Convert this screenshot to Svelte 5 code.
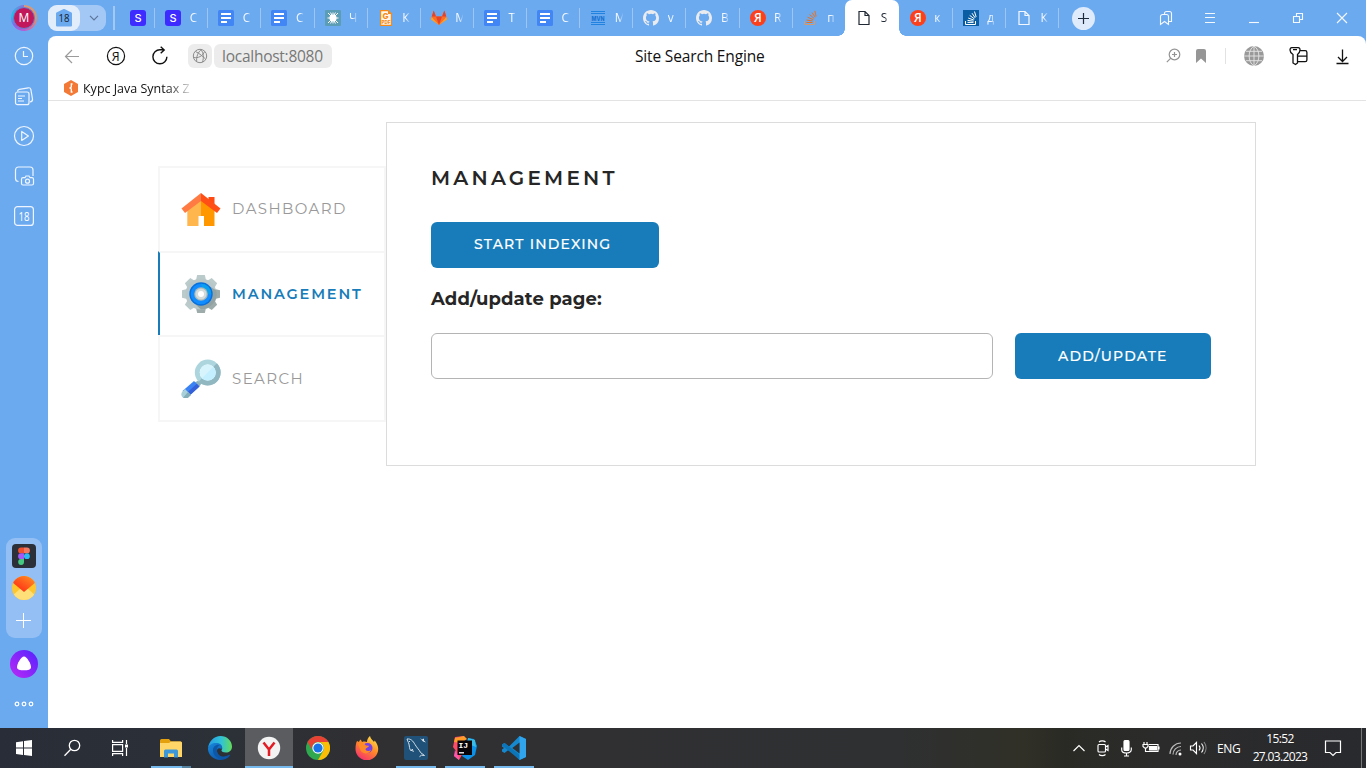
<script>
  const tabs = [
    { icon: 'skill', label: 'С' },
    { icon: 'doc', label: 'С' },
    { icon: 'doc', label: 'С' },
    { icon: 'burst', label: 'Ч' },
    { icon: 'pdf', label: 'К' },
    { icon: 'gitlab', label: 'М' },
    { icon: 'doc', label: 'Т' },
    { icon: 'doc', label: 'С' },
    { icon: 'mvn', label: 'М' },
    { icon: 'github', label: 'v' },
    { icon: 'github', label: 'В' },
    { icon: 'yandex', label: 'R' },
    { icon: 'stack', label: 'п' },
    { icon: 'file', label: 'S', active: true },
    { icon: 'yandex', label: 'к' },
    { icon: 'stackbox', label: 'д' },
    { icon: 'file', label: 'К' }
  ];
  const menu = [
    { icon: 'home', label: 'DASHBOARD' },
    { icon: 'gear', label: 'MANAGEMENT', active: true },
    { icon: 'lens', label: 'SEARCH' }
  ];
  const rail = ['clock', 'notes', 'play', 'shot', 'cal'];
  const apps = [
    { icon: 'folder', open: true },
    { icon: 'edge' },
    { icon: 'ybrowser', active: true },
    { icon: 'chrome' },
    { icon: 'firefox' },
    { icon: 'mysql', open: true },
    { icon: 'idea', open: true },
    { icon: 'vscode', open: true }
  ];
  const teeth = [0, 45, 90, 135, 180, 225, 270, 315];
  let pageUrl = '';
</script>

{#snippet favicon(name)}
  <svg class="fav" width="16" height="16" viewBox="0 0 16 16" fill="none">
    {#if name === 'skill'}
      <rect width="16" height="16" rx="3" fill="#3d2bff" />
      <text x="8" y="12" text-anchor="middle" font-size="11" font-weight="500" fill="#fff" font-family="Inter">S</text>
    {:else if name === 'doc'}
      <rect width="16" height="16" rx="1.5" fill="#4285f4" />
      <path d="M3 4h10M3 8h10M3 12h6" stroke="#fff" stroke-width="2" />
    {:else if name === 'burst'}
      <rect width="16" height="16" rx="1" fill="#5b9db5" />
      <circle cx="8" cy="8" r="3.6" fill="#fff" />
      <path d="M8 2.5v11M2.5 8h11M3 3l10 10M13 3L3 13M5.6 2.5l4.8 11M10.4 2.5l-4.8 11" stroke="#fff" />
    {:else if name === 'pdf'}
      <path d="M2.600.600h7.600l3.200 3.400v11.400H2.600z" fill="#fff8ee" stroke="#f78a16" stroke-width="1.200" />
      <path d="M10 0v4h4z" fill="#f78a16" />
      <text x="7.500" y="8.800" text-anchor="middle" font-size="8" font-weight="800" fill="#f78a16" font-family="Inter">G</text>
      <text x="8" y="14" text-anchor="middle" font-size="5" font-weight="800" fill="#f78a16" font-family="Inter" textLength="9" lengthAdjust="spacingAndGlyphs">PDF</text>
    {:else if name === 'gitlab'}
      <path d="M0 9L2.7.5 5 6.5h6L13.3.5 16 9l-8 6z" fill="#fc6d26" />
      <path d="M5 6.5h6L8 15z" fill="#e24329" />
      <path d="M.6 7L0 9.5 8 15zM15.4 7l.6 2.5L8 15z" fill="#fca326" />
      <path d="M.7 6.5L2.7.5 5 6.5zM11 6.5L13.3.5l2 6z" fill="#e24329" />
    {:else if name === 'mvn'}
      <path d="M1 1.500h14M1 3.500h14M1 12.500h14M1 14.500h14" stroke="#2182df" stroke-width="1" />
      <text x="8" y="10.500" text-anchor="middle" font-size="6.500" font-weight="800" fill="#1672d2" font-family="Inter" textLength="13" lengthAdjust="spacingAndGlyphs">MVN</text>
    {:else if name === 'github'}
      <path fill="#e9ebee" d="M8 0C3.58 0 0 3.58 0 8c0 3.54 2.29 6.53 5.47 7.59.4.07.55-.17.55-.38v-1.49c-2.01.37-2.53-.49-2.69-.94-.09-.23-.48-.94-.82-1.13-.28-.15-.68-.52-.01-.53.63-.01 1.08.58 1.23.82.72 1.21 1.87.87 2.33.66.07-.52.28-.87.51-1.07-1.78-.2-3.64-.89-3.64-3.95 0-.87.31-1.59.82-2.15-.08-.2-.36-1.02.08-2.12 0 0 .67-.21 2.2.82a7.6 7.6 0 014 0c1.53-1.04 2.2-.82 2.2-.82.44 1.1.16 1.92.08 2.12.51.56.82 1.27.82 2.15 0 3.07-1.87 3.75-3.65 3.95.29.25.54.73.54 1.48v2.2c0 .21.15.46.55.38A8 8 0 0016 8c0-4.42-3.58-8-8-8z" />
    {:else if name === 'yandex'}
      <circle cx="8" cy="8" r="8" fill="#fc3f1d" />
      <text x="7.8" y="12.4" text-anchor="middle" font-size="12" font-weight="600" fill="#fff" font-family="Open Sans">Я</text>
    {:else if name === 'stack'}
      <path d="M1.500 11v3.500h10V11" stroke="#d39a70" stroke-width="1" />
      <path d="M3.500 12.500h6M3.500 10l6.200 1M4.500 7.200l5.700 2.500M6.500 4.500l4.700 4M9 2.500l3.200 4.800M11.800.800l1.300 5.500" stroke="#ee6f17" stroke-width="1" />
    {:else if name === 'stackbox'}
      <rect width="16" height="16" fill="#0a5da3" />
      <path d="M2.5 11v3.5h10V11M4.5 12.4h6M4.5 10.4l6 .8M5.2 8l5.6 2M6.7 5.4l4.7 3.5M9 3.2l3.2 4.7M11.500 1.500l1.600 5.400" stroke="#fff" stroke-width="1" />
    {:else if name === 'file'}
      <path d="M3 1.500h6l4 4v9H3zM9 1.500v4h4" stroke="currentColor" stroke-width="1.200" />
    {/if}
  </svg>
{/snippet}

{#snippet railicon(name)}
  <svg width="24" height="24" viewBox="0 0 24 24" fill="none" stroke="#eef5ff" stroke-width="1.2">
    {#if name === 'clock'}
      <circle cx="12" cy="12" r="8.7" /><path d="M11.5 7v5.5H16" />
    {:else if name === 'notes'}
      <rect x="3.5" y="8" width="13.5" height="12.7" rx="2" />
      <path d="M6 12h7M6 14.5h4M6 17h6M5.5 7.5c0-1.6.7-2 1.8-2.200l9-1.500c1.400-.2 2.300.5 2.600 1.800L20.500 15c.2 1.500-.6 2.700-2.500 3" />
    {:else if name === 'play'}
      <circle cx="12" cy="12" r="9.5" /><path d="M9.7 7.500v9l6.700-4.500z" stroke-linejoin="round" />
    {:else if name === 'shot'}
      <path d="M6.500 17.500A3 3 0 013.500 14.500V6a3 3 0 013-3H18a3 3 0 013 3v6" />
      <path d="M11 13.700h2l1-1.700h3l1 1.700h2a1.500 1.500 0 011.500 1.500v4.300a1.500 1.500 0 01-1.500 1.500h-9a1.500 1.500 0 01-1.500-1.500v-4.300a1.500 1.500 0 011.500-1.500z" />
      <circle cx="15.500" cy="17.200" r="2" />
    {:else}
      <rect x="2.600" y="2.600" width="18.800" height="18.800" rx="3" />
      <text x="12" y="16.500" text-anchor="middle" font-size="12" stroke="none" fill="#fff" font-family="Open Sans" textLength="11" lengthAdjust="spacingAndGlyphs">18</text>
    {/if}
  </svg>
{/snippet}

{#snippet menuicon(name)}
  <svg width="40" height="40" viewBox="0 0 40 40" fill="none">
    {#if name === 'home'}
      <path d="M27.500 8h6v8l-6-4z" fill="#ff4b12" />
      <path d="M6.300 18L20 6.500V37H6.300z" fill="#ffb64c" />
      <path d="M20 6.500L33.500 18v19H20z" fill="#ff9800" />
      <path d="M17.500 27h5.500v11h-5.500z" fill="#fff" />
      <path d="M.5 19.500L20 4v8L4 24z" fill="#ff7b43" />
      <path d="M20 4l19.500 15.500L36 24 20 12z" fill="#ff4f17" />
    {:else if name === 'gear'}
      {#each teeth as angle}
        <path d="M14.500 8L16.200 1h7.600l1.700 7z" fill={angle > 80 && angle < 200 ? '#9eabab' : '#bbcaca'} transform="rotate({angle} 20 20)" />
      {/each}
      <circle cx="20" cy="20" r="15.500" fill="#b9c7c8" />
      <path d="M28 12l7.500 4.500A15.500 15.500 0 0120 35.500l-8-7.500z" fill="#93a3a3" />
      <circle cx="20" cy="20" r="11.700" fill="#0870dc" />
      <circle cx="20" cy="20" r="10.300" fill="#118cff" />
      <path d="M20 9.700A10.300 10.300 0 0130.300 20L23 20z" fill="#08a0ef" />
      <circle cx="20" cy="20" r="6.800" fill="#a9b7b5" />
      <circle cx="20" cy="20" r="5.600" fill="#d2dada" />
      <circle cx="20" cy="20" r="3" fill="#fff" />
    {:else}
      <g transform="translate(0 1)">
        <path d="M13.500 23.500l5 4 2.500-4-2.500-2.500z" fill="#8fb3bd" />
        <circle cx="26.700" cy="13.500" r="10.400" stroke="#add5de" stroke-width="5" />
        <path d="M35.900 4.300A13 13 0 0117.500 22.700l3.500-3.500A8 8 0 0032.400 7.800z" fill="#91b7c1" />
        <circle cx="26.700" cy="13.500" r="8" fill="#d7f4fc" />
        <path d="M32.400 7.800A8 8 0 0121 19.200z" fill="#c4efff" />
        <path d="M13 22l5.500 5.500L7.500 37.500 1.500 32z" fill="#3b83f5" />
        <path d="M15.800 24.800l2.700 2.700-11 10L4.700 35z" fill="#3560d8" />
        <path d="M4 30l6 6-2.500 2.300A4.200 4.200 0 011.500 32.400z" fill="#a8d0da" />
        <path d="M7 33l3 3-2.500 2.300c-1.600 1.500-4 1.400-5.300.2z" fill="#83aeb9" />
      </g>
    {/if}
  </svg>
{/snippet}

{#snippet appicon(name)}
  <svg width="24" height="24" viewBox="0 0 24 24" fill="none">
    {#if name === 'folder'}
      <path d="M1 4.500A1.500 1.500 0 012.500 3H10l2 2.500h9.500A1.500 1.500 0 0123 7v14H1z" fill="#e5a00d" />
      <path d="M1 7h9l2-1.500h9.500A1.500 1.500 0 0123 7v14H1z" fill="#ffd667" />
      <path d="M5 21.500v-6.500a1.500 1.500 0 011.500-1.500h11A1.500 1.500 0 0119 15v6.500h-4v-4H9v4z" fill="#3d97d8" />
    {:else if name === 'edge'}
      <defs>
        <linearGradient id="edgeTop" x1="0" y1="0" x2="1" y2="0"><stop stop-color="#279be5" /><stop offset=".55" stop-color="#30c2d8" /><stop offset="1" stop-color="#65db59" /></linearGradient>
        <linearGradient id="edgeLow" x1="0" y1="0" x2="1" y2="1"><stop stop-color="#1789dc" /><stop offset="1" stop-color="#0b479b" /></linearGradient>
      </defs>
      <path d="M0 12C1 5 6 0 12.500 0 19 0 24 5 24 10.500c0 4-3 6-6 6-3.500 0-5-1.400-4.500-2.500 2-2 0-6-5-6C4 8 1 10 0 12z" fill="url(#edgeTop)" />
      <path d="M0 12c1-3 4-5 8-5 5 0 7 3 5.500 6-3-2-5 0-4.500 3 .6 4 5 6 9 4 2-.7 4-2 4-.8C20 22.500 16 24 12 24 5 24-.5 18 0 12z" fill="url(#edgeLow)" />
      <path d="M5 14c0-3 3-6 7-5-4 2-4 7-1 10 3 3 8 2 11 .300C18 25 5 24 5 14z" fill="#0d57a8" />
    {:else if name === 'ybrowser'}
      <circle cx="12" cy="12" r="11.200" fill="#f3f3f3" />
      <path d="M6.500 6.500l5.500 7 5.500-7M12 13v7" stroke="#e31b23" stroke-width="2.500" />
    {:else if name === 'chrome'}
      <circle cx="12" cy="12" r="12" fill="#2fa84f" />
      <path d="M1.600 6A12 12 0 0122.400 6H12a6 6 0 00-5.200 9z" fill="#e94235" />
      <path d="M22.400 6A12 12 0 0112 24l5.200-9A6 6 0 0012 6z" fill="#fbbd05" />
      <circle cx="12" cy="12" r="5.700" fill="#fff" /><circle cx="12" cy="12" r="4.600" fill="#1a73e8" />
    {:else if name === 'firefox'}
      <defs><linearGradient id="fox" x1=".8" y1="0" x2=".2" y2="1"><stop stop-color="#ffe34c" /><stop offset=".45" stop-color="#ff8b27" /><stop offset="1" stop-color="#f52b73" /></linearGradient></defs>
      <path d="M2 5l2 1c.3-1 1-2 1.700-2.500L7 6c2-.8 4-.5 5 0 0-2.500 1-4.500 3-6 .5 3 3 4 4 6l.7-1.500c2.500 3 3.500 6 3.500 8.500A11.300 11.300 0 01.500 13C.5 9.500 1 7 2 5z" fill="url(#fox)" />
      <circle cx="12.500" cy="12" r="5" fill="#7542e5" />
      <path d="M3 8c3-2 6-1 8 1.500l3 .2c-.5 2-3 1.800-3.500 3.300 0 2 3.500 3 5.500.5-1 5-9.500 5.500-11-.5z" fill="#ff8a27" />
    {:else if name === 'mysql'}
      <rect width="24" height="24" rx="2" fill="#205178" />
      <path d="M3 3c4-.5 6 2 8 5.500 2 3.500 4.500 5.500 5.500 8l4 3-3-.3-2 1.500M3 3c1 3 2 4 2.300 7 .2 2 .6 4 2 5l1-2 1 3M5 5l1 1" stroke="#d3e0e8" stroke-width="1" />
      <path d="M16 2l2 1.500 2-1v2l2 2-3-1z" fill="#dbe7ed" />
    {:else if name === 'idea'}
      <path d="M2 1l9-1 2 12-7 12-5-4 2-5-3-4z" fill="#ff4a68" />
      <path d="M11 0l3 3-6 4-7-1 1-4z" fill="#ff9c2a" />
      <path d="M15 2l6 1 3 7-2 9-7 5-6-4z" fill="#0b91e8" />
      <path d="M15 2l7 2 1 7-8-3z" fill="#39bce6" />
      <path d="M2 14l4 7 0 3-5-4z" fill="#f857ac" />
      <rect x="4.500" y="4.500" width="14.500" height="14.500" fill="#080508" />
      <text x="5.500" y="12" font-size="8" font-weight="700" fill="#fff" font-family="Liberation Mono">IJ</text>
      <path d="M6 16.800h5" stroke="#fff" stroke-width="1.300" />
    {:else}
      <path d="M17.500 0L24 3v18l-6.500 3L7 13.500 2.500 17 0 15.500V8.500L2.500 7 7 10.500z" fill="#1688cf" />
      <path d="M0 8.500L2.500 7 18 19v5L0 9.500z" fill="#0c75b8" />
      <path d="M17.500 0L24 3v18l-6.500 3z" fill="#30a5ed" />
      <path d="M17.500 6.500v11L10.300 12zM0 10.500v3L2 12z" fill="#2e3034" />
    {/if}
  </svg>
{/snippet}

<div class="screen">
  <header class="tabbar">
    <div class="avatar"><span>M</span></div>
    <div class="group">
      <div class="count">
        <svg width="18" height="18" viewBox="0 0 18 18"><path d="M9 1l7 3.500v12H2v-12z" fill="#6caaf0" stroke="#6caaf0" stroke-width="2" stroke-linejoin="round" /><text x="9" y="13" text-anchor="middle" font-family="Open Sans" font-size="11" fill="#15202d" textLength="11" lengthAdjust="spacingAndGlyphs">18</text></svg>
      </div>
      <svg class="chev" width="10" height="6" viewBox="0 0 10 6" fill="none"><path d="M1 .8l4 4 4-4" stroke="#5d7598" stroke-width="1.200" /></svg>
    </div>
    <i class="split"></i>
    <div class="tab pinned">{@render favicon('skill')}</div>
    <div class="tabs">
      {#each tabs as tab, i}
        <div class="tab" class:active={tab.active} class:plain={tabs[i + 1]?.active}>
          {@render favicon(tab.icon)}<span class="letter">{tab.label}</span>
        </div>
      {/each}
    </div>
    <div class="newtab"><svg width="23" height="23" viewBox="0 0 23 23"><circle cx="11.500" cy="11.500" r="11.500" fill="#dfebfb" /><path d="M6 11.500h11M11.500 6v11" stroke="#1d2b3c" stroke-width="1.200" /></svg></div>
    <div class="winctl">
      <svg viewBox="0 0 16 16"><path d="M2.500 6.500a2 2 0 012-2h4a2 2 0 012 2v8l-4-3-4 3zM6.500 4.500v-1a2 2 0 012-2h3a2 2 0 012 2v8h-2.500" /></svg>
      <svg viewBox="0 0 16 16"><path d="M3 3.500h10M3 7.500h10M3 12.500h10" /></svg>
      <svg viewBox="0 0 16 16"><path d="M3 12.500h10" /></svg>
      <svg viewBox="0 0 16 16"><path d="M3.500 6.500h6v6h-6zM6.500 6V3.500h6v6H10" /></svg>
      <svg viewBox="0 0 16 16"><path d="M3 3l10 10M13 3L3 13" /></svg>
    </div>
  </header>

  <div class="body">
    <aside class="rail">
      <div class="railtop">
        {#each rail as name}<div class="railcell">{@render railicon(name)}</div>{/each}
      </div>
      <div class="dock">
        <svg width="24" height="24" viewBox="0 0 24 24">
          <rect width="24" height="24" rx="4" fill="#2c3038" />
          <path d="M12 3.500H9a2.900 2.900 0 000 5.800h3z" fill="#ef5130" /><path d="M12 3.500h3a2.900 2.900 0 010 5.800h-3z" fill="#f47762" />
          <path d="M12 9.300H9a2.900 2.900 0 000 5.800h3z" fill="#a259f7" /><circle cx="14.900" cy="12.200" r="2.900" fill="#29baf7" />
          <path d="M12 15.100H9a2.900 2.900 0 103 2.900z" fill="#45ca81" />
        </svg>
        <svg width="24" height="24" viewBox="0 0 24 24">
          <defs><linearGradient id="mail" x1="1" y1="0" x2="0" y2="1"><stop stop-color="#ff9a22" /><stop offset=".7" stop-color="#ff3f19" /></linearGradient><clipPath id="round"><circle cx="12" cy="12" r="12" /></clipPath></defs>
          <g clip-path="url(#round)"><path d="M0 0h24v24H0z" fill="#ffc52e" /><path d="M0 20l9-8h6l9 8v4H0z" fill="#ffe078" /><path d="M0 0h24v6L12 16 0 6z" fill="url(#mail)" /></g>
        </svg>
        <svg class="plus" width="16" height="16" viewBox="0 0 16 16"><path d="M0 8.500h15M7.500 1v15" stroke="#fff" stroke-width="1" /></svg>
      </div>
      <svg class="alice" width="28" height="28" viewBox="0 0 28 28">
        <defs><linearGradient id="al" x1="1" y1="0" x2="0" y2="1"><stop stop-color="#5223ff" /><stop offset="1" stop-color="#bd2af5" /></linearGradient></defs>
        <circle cx="14" cy="14" r="14" fill="url(#al)" /><path d="M14 6.500c3 0 7 7.500 7 10.500s-3 3.300-7 3.300S7 20 7 17s4-10.500 7-10.500z" fill="#fff" />
      </svg>
      <svg width="20" height="6" viewBox="0 0 20 6" fill="none" stroke="#fff" stroke-width="1.200"><circle cx="3" cy="3" r="1.800" /><circle cx="10" cy="3" r="1.800" /><circle cx="17" cy="3" r="1.800" /></svg>
    </aside>

    <section class="view">
      <div class="toolbar">
        <div class="nav">
          <svg width="20" height="20" viewBox="0 0 20 20" fill="none" stroke="#9b9b9b" stroke-width="1.200"><path d="M17 10.500H3.500M10 4l-6.500 6.500L10 17" /></svg>
          <svg width="20" height="20" viewBox="0 0 20 20" fill="none"><circle cx="10" cy="10" r="8.600" stroke="#111" stroke-width="1.200" /><text x="9.600" y="14.500" text-anchor="middle" font-family="Open Sans" font-size="12.500" fill="#111">Я</text></svg>
          <svg width="20" height="20" viewBox="0 0 20 20" fill="none" stroke="#111" stroke-width="1.400"><path d="M16.900 10.800a7 7 0 11-6.900-7h4M10.700.800l3.500 3.100-3.500 3.300" /></svg>
        </div>
        <div class="chip site"><svg width="16" height="16" viewBox="0 0 16 16" fill="none" stroke="#8b8b8b"><circle cx="8" cy="8" r="6.700" /><path d="M3.500 3.500c4 2 7.500 5 10 7.500M1.500 9.500C6 10.500 11 8 12.500 3.500M9.500 1.500C6 4 4 9 4.800 13.800M9 1.500c2.500 3.500 3 8 1.500 12.500" /></svg></div>
        <div class="chip url"><span>localhost:8080</span></div>
        <div class="title">Site Search Engine</div>
        <div class="actions">
          <svg class="mag" width="16" height="16" viewBox="0 0 16 16" fill="none" stroke="#949494" stroke-width="1.200"><circle cx="8.500" cy="6.500" r="5.300" /><path d="M4.800 10.200L.800 14.200M6 6.500h5M8.500 4v5" /></svg>
          <svg class="bm" width="12" height="16" viewBox="0 0 12 16"><path d="M1 3a2 2 0 012-2h6a2 2 0 012 2v12l-5-4.500L1 15z" fill="#969696" /></svg>
          <i></i>
          <svg class="globe" width="20" height="20" viewBox="0 0 20 20" fill="none"><circle cx="10" cy="10" r="10" fill="#999" /><path d="M10 0v20M0 10h20M2 5.300h16M2 14.700h16M10 0C3.500 4 3.500 16 10 20M10 0c6.500 4 6.500 16 0 20" stroke="#e7e7e7" stroke-width=".9" /></svg>
          <svg class="key" width="20" height="20" viewBox="0 0 20 20" fill="none" stroke="#111" stroke-width="1.300"><path d="M2.800 1.700h6.400c1.300 0 1.900.8 1.800 2.300-.1 2-.8 3.200-2.500 4.500V17L6.500 18.500 4 17V8.500C2 7.200 1 5.500 1 4c0-1.500.5-2.300 1.800-2.300zM4 3.700h4M11.200 4.700h5a1.700 1.700 0 011.700 1.700V14a1.700 1.700 0 01-1.700 1.700H8.700M8.700 10.200h9" /></svg>
          <svg width="16" height="20" viewBox="0 0 16 20" fill="none" stroke="#111" stroke-width="1.300"><path d="M8.500 3.500v12M4 11l4.500 4.500 4.500-4.500M2.500 17.500h12" /></svg>
        </div>
      </div>
      <div class="bookmarks">
        <svg width="16" height="16" viewBox="0 0 16 16"><path d="M8 0l7 4v8l-7 4-7-4V4z" fill="#f37a36" /><path d="M9.500 4H8.300v3L7 8l1.300 1v3h1.200" stroke="#fff" stroke-width="1.300" fill="none" /></svg>
        <span>Курс Java Syntax Z</span>
      </div>

      <main class="page">
        <nav class="menu">
          {#each menu as item}
            <div class="item" class:on={item.active}>{@render menuicon(item.icon)}<span class={item.icon}>{item.label}</span></div>
          {/each}
        </nav>
        <section class="panel">
          <h1><span>MANAGEMENT</span></h1>
          <button class="btn start"><span>START INDEXING</span></button>
          <h2><span>Add/update page:</span></h2>
          <div class="form">
            <input type="text" bind:value={pageUrl} />
            <button class="btn add"><span>ADD/UPDATE</span></button>
          </div>
        </section>
      </main>
    </section>
  </div>

  <footer class="taskbar">
    <div class="cell"><svg width="16" height="16" viewBox="0 0 16 16" fill="#fff"><path d="M0 2.200l7-1v6.400H0zM8 1l8-1v7.600H8zM0 8.500h7v6.400l-7-1zM8 8.500h8V16l-8-1z" /></svg></div>
    <div class="cell"><svg width="18" height="18" viewBox="0 0 18 18" fill="none" stroke="#fff" stroke-width="1.300"><circle cx="11.500" cy="6.500" r="5.200" /><path d="M7.800 10.300L1.500 16.700" /></svg></div>
    <div class="cell"><svg width="16" height="16" viewBox="0 0 16 16" fill="none" stroke="#fff" stroke-width="1.200"><path d="M.600 0v2.400h10V0M.600 16v-2.400h10V16M.600 4.700h10v6.600H.600zM14.500 0v4M14.500 8v8" /><path d="M13 4.500h3v3h-3z" fill="#fff" stroke="none" /></svg></div>
    <div class="apps">
      {#each apps as app}
        <div class="app" class:open={app.open} class:current={app.active} class:multi={app.icon === 'folder'}>{@render appicon(app.icon)}</div>
      {/each}
    </div>
    <div class="tray">
      <svg width="24" height="20" viewBox="0 0 24 20"><path d="M6.500 13l5.500-5.500 5.500 5.500" /></svg>
      <svg width="24" height="20" viewBox="0 0 24 20"><rect x="7" y="6.500" width="7.500" height="7.500" rx="1" /><path d="M14.500 9l2.500-1.500v5L14.500 11M8 4c1.500-1.500 5-1.500 6.500 0M8 16.500c1.500 1.500 5 1.500 6.500 0" /></svg>
      <svg width="24" height="20" viewBox="0 0 24 20"><rect x="9" y="2.500" width="5" height="10" rx="1" fill="#fff" /><path d="M6.700 9.500v2.200c0 4.400 9.600 4.400 9.600 0V9.500M11.500 15v2.800M9 18h5" /></svg>
      <svg width="24" height="20" viewBox="0 0 24 20"><path d="M10 6.500h9v7H8M20 8.500v3M5 4v2M8 4v2M4 6.500h5v2l-1.500 1.500h-2L4 8.500zM6.500 10v3.500H9" /><path d="M10.500 8.500h7v3.500h-7z" fill="#fff" /></svg>
      <svg width="24" height="20" viewBox="0 0 24 20"><path d="M7 16A11 11 0 0118 5M10 16.500a8 8 0 018-8M13 17a5 5 0 015-5" stroke="#bbb" /><circle cx="17" cy="16" r="1.500" fill="#fff" stroke="none" /></svg>
      <svg width="24" height="20" viewBox="0 0 24 20"><path d="M3.500 8h2.500l3.500-3.500v11L6 12H3.500zM12 7.500a4 4 0 010 5M14.500 5.500a7 7 0 010 9" /><path d="M17 4a10 10 0 010 12" stroke="#888" /></svg>
    </div>
    <span class="lang">ENG</span>
    <div class="clock"><span>15:52</span><span class="date">27.03.2023</span></div>
    <svg class="note" width="18" height="18" viewBox="0 0 18 18" fill="none" stroke="#fff" stroke-width="1.200"><path d="M1.500 2h15v11.500h-4.500L9 16.500l-3-3H1.500z" /></svg>
    <i class="peek"></i>
  </footer>
</div>

<style>
  :global(body) { margin: 0; overflow: hidden; }
  .screen { width: 1366px; height: 768px; display: flex; flex-direction: column; background: #6caaf0; font-family: "Open Sans", "Noto Sans", sans-serif; color: #111; overflow: hidden; }
  .screen :global(*) { box-sizing: border-box; }
  svg { display: block; flex: none; }

  .tabbar { height: 36px; display: flex; align-items: center; flex: none; }
  .avatar { width: 26px; height: 26px; margin: 0 11px; border-radius: 50%; padding: 2px; background: conic-gradient(#d89a78, #e69361 25%, #b95ad4 50%, #8a64eb 65%, #18c5e8 78%, #8c72dc); display: flex; flex: none; }
  .avatar span { flex: 1; border-radius: 50%; background: #c2185b; border: 1px solid #6380d3; color: #fff; font-size: 12px; line-height: 20px; text-align: center; }
  .group { width: 58px; height: 26px; border-radius: 9px; background: #a3c8f6; display: flex; align-items: center; flex: none; }
  .count { width: 32px; height: 26px; border-radius: 9px; background: #e2edfc; display: flex; align-items: center; justify-content: center; }
  .chev { margin-left: 9px; }
  .split { width: 2px; height: 24px; margin: 0 5px 0 7px; background: #a2c8f6; flex: none; }
  .tab { width: 53.130px; height: 36px; display: flex; align-items: center; padding-left: 10.600px; color: #f3f8ff; position: relative; flex: none; }
  .tab::after { content: ""; position: absolute; right: -.600px; top: 8px; height: 20px; width: 1px; background: #9dc5f5; }
  .pinned { width: 36px; padding-left: 10px; }
  .pinned::after { right: 1px; }
  .tabs { display: flex; flex: none; margin-left: -1.400px; }
  .tab.plain::after { display: none; }
  .active { width: 53.800px; background: #fff; border-radius: 7px 7px 0 0; color: #202833; padding-left: 11px; }
  .active::before, .tab.active::after { content: ""; position: absolute; top: auto; bottom: 0; width: 7px; height: 7px; }
  .active::before { left: -7px; background: radial-gradient(circle at 0 0, transparent 6.500px, #fff 7px); }
  .tab.active::after { right: -7px; background: radial-gradient(circle at 100% 0, transparent 6.500px, #fff 7px); }
  .letter { width: 14px; margin-left: 8.500px; font-size: 12px; line-height: 18px; mask-image: linear-gradient(90deg, #000 4px, transparent 8.500px); }
  .newtab { margin-left: 13.500px; flex: none; }
  .winctl { margin-left: auto; margin-right: 2px; display: flex; gap: 28px; padding: 0 14px; }
  .winctl svg { width: 16px; height: 16px; fill: none; stroke: #f4f8ff; stroke-width: 1.100; }

  .body { display: flex; flex: 1; min-height: 0; }
  .rail { width: 48px; display: flex; flex-direction: column; align-items: center; flex: none; }
  .railcell { height: 40px; display: flex; align-items: center; }
  .dock { margin-top: auto; width: 36px; height: 100px; border-radius: 9px; background: #93bff4; padding-top: 6px; display: flex; flex-direction: column; align-items: center; gap: 8px; }
  .plus { margin-top: 4px; }
  .alice { margin: 12px 0 23px; }
  .rail > svg:last-child { margin-bottom: 21px; }

  .view { flex: 1; background: #fff; border-radius: 8px 8px 0 0; display: flex; flex-direction: column; }
  .toolbar { height: 40px; display: flex; align-items: center; padding-left: 14px; }
  .nav { display: flex; gap: 24px; margin-right: 18px; }
  .chip { height: 24px; background: #ececec; border-radius: 6px; display: flex; align-items: center; }
  .site { width: 24px; padding-left: 4px; margin-right: 2px; }
  .url { width: 118px; padding-left: 8px; color: #777; font-size: 15.500px; }
  .url span { letter-spacing: -.260px; white-space: nowrap; }
  .title { margin-left: 303px; font-size: 15.500px; letter-spacing: -.160px; white-space: nowrap; }
  .actions { margin-left: auto; display: flex; align-items: center; padding-right: 16px; }
  .mag { margin-right: 13px; }
  .actions i { width: 1px; height: 16px; background: #e2e2e2; margin: 0 18px; }
  .globe { margin-right: 25px; }
  .key { margin-right: 25px; }
  .bookmarks { height: 25px; border-bottom: 1px solid #e3e3e3; display: flex; align-items: center; padding-left: 15px; font-size: 12.500px; }
  .bookmarks span { margin-left: 4px; white-space: nowrap; letter-spacing: 0; background: linear-gradient(90deg, #111 78%, #ddd 100%); background-clip: text; -webkit-text-fill-color: transparent; }

  .page { flex: 1; padding: 21px 0 0 110px; display: flex; align-items: flex-start; font-family: Montserrat, Inter, sans-serif; }
  .menu { width: 228px; margin-top: 44px; border: 2px solid #f6f6f6; border-top: 0; }
  .item { height: 84.500px; border-top: 2px solid #f6f6f6; padding-left: 21px; display: flex; align-items: center; gap: 11px; color: #999; font-size: 15px; }
  .item span { letter-spacing: 1.400px; font-weight: 400; white-space: nowrap; }
  .item .home { padding-bottom: 1px; }
  .item.on { margin-left: -2px; border-left: 2px solid #177cb9; color: #177cb9; }
  .item.on span { font-weight: 600; letter-spacing: 1.850px; font-size: 14.500px; }
  .panel { width: 870px; height: 344px; border: 1px solid #dcdcdc; padding: 43px 44px 44px; }
  h1, h2 { margin: 0; font-weight: 600; color: #262626; }
  h1 { font-size: 20px; line-height: 24px; letter-spacing: 3.200px; }
  .btn { height: 46px; border: 0; border-radius: 6px; background: #177cb9; color: #fff; font: 500 14px/20px Montserrat, Inter, sans-serif; text-align: left; padding: 0 0 1px 43px; white-space: nowrap; -webkit-text-stroke: .150px #fff; }
  .start { width: 228px; display: block; margin-top: 32px; letter-spacing: 1.180px; padding-bottom: 2px; }
  h2 { font-size: 18px; line-height: 22px; margin-top: 20px; font-weight: 700; letter-spacing: .120px; }
  .form { display: flex; gap: 22px; margin-top: 23px; }
  input { width: 562px; height: 46px; border: 1px solid #b4b4b4; border-radius: 6px; background: #fff; outline: 0; padding: 0 16px; }
  .add { width: 196px; letter-spacing: 1.180px; }

  .taskbar { height: 40px; flex: none; display: flex; align-items: center; color: #fff; background: linear-gradient(90deg, #292d37 0, #2c3037 17%, #302f32 28%, #303033 45%, #2e3032 65%, #303027 75%, #2a2a25 78%, #2b2b2b 85%, #292a2e 100%); }
  .cell { width: 48px; height: 40px; display: flex; align-items: center; justify-content: center; }
  .apps { display: flex; gap: 1px; margin-left: 3px; }
  .app { width: 48px; height: 40px; display: flex; align-items: center; justify-content: center; position: relative; }
  .open::after, .current::after { content: ""; position: absolute; left: 4px; right: 4px; bottom: 0; height: 2px; background: #76b9ed; }
  .multi::after { background: linear-gradient(90deg, #76b9ed 31px, #55829f 31px); }
  .current { background: #5b5c60; }
  .current::after { left: 0; right: 0; }
  .tray { display: flex; margin-left: auto; }
  .tray svg { fill: none; stroke: #fff; stroke-width: 1.150; }
  .lang { width: 28px; margin-left: 6px; font-size: 12px; letter-spacing: -.400px; }
  .clock { width: 70px; display: flex; flex-direction: column; align-items: center; font-size: 12px; line-height: 18px; letter-spacing: -.650px; }
  .note { margin: 0 19px 0 9px; }
  .peek { width: 1px; height: 40px; background: #777; margin-right: 4px; }
</style>
